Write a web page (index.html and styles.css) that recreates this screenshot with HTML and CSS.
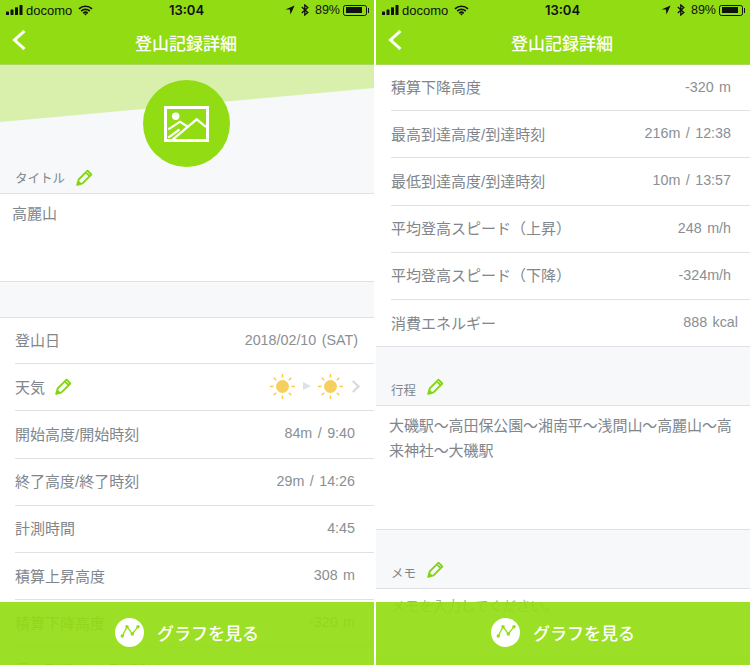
FILE: index.html
```html
<!DOCTYPE html>
<html lang="ja">
<head>
    <meta charset="UTF-8" />
    <meta name="viewport" content="width=device-width, initial-scale=1.0" />
    <title>登山記録詳細</title>
    <link rel="stylesheet" href="styles.css">
</head>
<body>
    <svg class="icon-defs" aria-hidden="true">
        <symbol id="i-signal" viewBox="0 0 17 10">
            <rect x="0" y="6.5" width="3" height="3.5" rx=".6" />
            <rect x="4.5" y="4.5" width="3" height="5.5" rx=".6" />
            <rect x="9" y="2.2" width="3" height="7.8" rx=".6" />
            <rect x="13.5" y="0" width="3" height="10" rx=".6" />
        </symbol>
        <symbol id="i-wifi" viewBox="0 0 15 11">
            <path d="M1 3.9a9.3 9.3 0 0 1 13 0M3.2 6.2a6.2 6.2 0 0 1 8.6 0M5.3 8.3a3.2 3.2 0 0 1 4.4 0" fill="none" stroke="#111" stroke-width="1.7" />
            <path d="M6.4 9.4l1.1-1 1.1 1-1.1 1.2z" />
        </symbol>
        <symbol id="i-arrow" viewBox="0 0 10 10">
            <path d="M9.6.4L.4 4.6h4.5l.6 5z" />
        </symbol>
        <symbol id="i-bt" viewBox="0 0 8 12">
            <path d="M.8 3l6 5.4L3.8 11V1l3 2.6-6 5.4" fill="none" stroke="#111" stroke-width="1.3" />
        </symbol>
        <symbol id="i-back" viewBox="0 0 14 20">
            <path d="M12.5 1l-10 9 10 9" fill="none" stroke="#fff" stroke-width="3" />
        </symbol>
        <symbol id="i-pencil" viewBox="0 0 17 17">
            <path d="M1.200 15.800l1.500-5.300 8.800-8.800 3.800 3.800-8.800 8.800zM9.800 3.400l3.800 3.800" fill="none" stroke="#84d414" stroke-width="1.800" stroke-linejoin="round" />
            <path d="M.6 16.400l1.500-5.400 3.900 3.900z" fill="#84d414" />
        </symbol>
        <symbol id="i-sun" viewBox="0 0 25 25">
            <circle cx="12.500" cy="12.500" r="6.500" fill="#f5cf62" />
            <path d="M12.500 0v3.500M12.500 21.500v3.500M0 12.500h3.500M21.500 12.500h3.500M3.700 3.700l2.500 2.500M18.800 18.800l2.500 2.500M3.700 21.300l2.500-2.500M18.800 6.200l2.500-2.500" stroke="#f7cb4d" stroke-width="1.500" />
        </symbol>
        <symbol id="i-graph" viewBox="0 0 29 29">
            <circle cx="14.500" cy="14.500" r="14.500" fill="#fff" />
            <path d="M7.300 18L12 8.700l5.300 7.300 5.700-7.300" fill="none" stroke="#92dc14" stroke-width="1.300" />
            <circle cx="7.300" cy="18" r="1.700" fill="#92dc14" />
            <circle cx="12" cy="8.700" r="1.700" fill="#92dc14" />
            <circle cx="17.300" cy="16" r="1.700" fill="#92dc14" />
            <circle cx="23" cy="8.700" r="1.700" fill="#92dc14" />
        </symbol>
    </svg>

    <div class="shots">
        <!-- left: top of the record -->
        <section class="phone">
            <header class="topbar">
                <div class="status">
                    <div class="status-left">
                        <svg class="ic-signal"><use href="#i-signal" /></svg>
                        <span>docomo</span>
                        <svg class="ic-wifi"><use href="#i-wifi" /></svg>
                    </div>
                    <div class="status-time">13:04</div>
                    <div class="status-right">
                        <svg class="ic-arrow"><use href="#i-arrow" /></svg>
                        <svg class="ic-bt"><use href="#i-bt" /></svg>
                        <span>89%</span>
                        <div class="battery"><div class="battery-fill"></div></div>
                    </div>
                </div>
                <div class="navbar">
                    <svg class="ic-back"><use href="#i-back" /></svg>
                    <h1>登山記録詳細</h1>
                </div>
            </header>

            <div class="hero">
                <div class="photo">
                    <svg class="ic-photo" viewBox="0 0 45 36">
                        <rect x="1.500" y="1.500" width="42" height="33" fill="none" stroke="#fff" stroke-width="3" />
                        <circle cx="11.700" cy="10.300" r="3.700" fill="#fff" />
                        <path d="M4.300 23.300L16 15.700l8.300 5.300M7.700 34.300l25-21L42 21M4.300 31.700L15.500 23.500" fill="none" stroke="#fff" stroke-width="2.200" />
                    </svg>
                </div>
                <div class="sec-label sec-label-hero">
                    <span>タイトル</span>
                    <svg class="ic-pencil"><use href="#i-pencil" /></svg>
                </div>
            </div>
            <div class="textbox textbox-title">高麗山</div>

            <div class="rows rows-first">
                <div class="row"><span>登山日</span><span class="val val-date">2018/02/10 (SAT)</span></div>
                <div class="row">
                    <span class="row-name">天気<svg class="ic-pencil"><use href="#i-pencil" /></svg></span>
                    <span class="weather">
                        <svg class="ic-sun"><use href="#i-sun" /></svg>
                        <span class="tri"></span>
                        <svg class="ic-sun"><use href="#i-sun" /></svg>
                        <span class="chev"></span>
                    </span>
                </div>
                <div class="row"><span>開始高度/開始時刻</span><span class="val">84m / 9:40</span></div>
                <div class="row"><span>終了高度/終了時刻</span><span class="val">29m / 14:26</span></div>
                <div class="row"><span>計測時間</span><span class="val">4:45</span></div>
                <div class="row"><span>積算上昇高度</span><span class="val">308 m</span></div>
                <div class="row"><span>積算下降高度</span><span class="val">-320 m</span></div>
                <div class="row"><span>最高到達高度/到達時刻</span><span class="val">216m / 12:38</span></div>
            </div>

            <a class="graph-btn">
                <svg class="ic-graph"><use href="#i-graph" /></svg>
                <span>グラフを見る</span>
            </a>
        </section>

        <!-- right: same screen scrolled down -->
        <section class="phone">
            <header class="topbar">
                <div class="status">
                    <div class="status-left">
                        <svg class="ic-signal"><use href="#i-signal" /></svg>
                        <span>docomo</span>
                        <svg class="ic-wifi"><use href="#i-wifi" /></svg>
                    </div>
                    <div class="status-time">13:04</div>
                    <div class="status-right">
                        <svg class="ic-arrow"><use href="#i-arrow" /></svg>
                        <svg class="ic-bt"><use href="#i-bt" /></svg>
                        <span>89%</span>
                        <div class="battery"><div class="battery-fill"></div></div>
                    </div>
                </div>
                <div class="navbar">
                    <svg class="ic-back"><use href="#i-back" /></svg>
                    <h1>登山記録詳細</h1>
                </div>
            </header>

            <div class="rows rows-scrolled">
                <div class="row"><span>積算下降高度</span><span class="val">-320 m</span></div>
                <div class="row"><span>最高到達高度/到達時刻</span><span class="val">216m / 12:38</span></div>
                <div class="row"><span>最低到達高度/到達時刻</span><span class="val">10m / 13:57</span></div>
                <div class="row"><span>平均登高スピード（上昇）</span><span class="val">248 m/h</span></div>
                <div class="row"><span>平均登高スピード（下降）</span><span class="val">-324m/h</span></div>
                <div class="row"><span>消費エネルギー</span><span class="val val-kcal">888 kcal</span></div>
            </div>

            <div class="sec-label">
                <span>行程</span>
                <svg class="ic-pencil"><use href="#i-pencil" /></svg>
            </div>
            <div class="textbox textbox-route">大磯駅〜高田保公園〜湘南平〜浅間山〜高麗山〜高来神社〜大磯駅</div>

            <div class="sec-label">
                <span>メモ</span>
                <svg class="ic-pencil"><use href="#i-pencil" /></svg>
            </div>
            <div class="textbox textbox-memo">メモを入力してください。</div>

            <a class="graph-btn">
                <svg class="ic-graph"><use href="#i-graph" /></svg>
                <span>グラフを見る</span>
            </a>
        </section>
    </div>
</body>
</html>
```

FILE: styles.css
```css
* {
    box-sizing: border-box;
}
body {
    margin: 0;
    background-color: #fff;
    color: #80868c;
    font-family: "Liberation Sans", "Noto Sans CJK JP", sans-serif;
    font-size: 14px;
}
.icon-defs {
    display: none;
}
.shots {
    display: flex;
    justify-content: space-between;
    width: 750px;
    height: 665px;
}
.phone {
    position: relative;
    width: 374px;
    height: 665px;
    overflow: hidden;
    background-color: #f7f8fa;
}

/* top bar */
.topbar {
    height: 65px;
    background-color: #92dc14;
    border-bottom: 1px solid #a8d860;
}
.status {
    display: grid;
    grid-template-columns: 1fr auto 1fr;
    align-items: center;
    height: 20px;
    padding: 0 7px 0 6px;
    color: #111;
    font-size: 13px;
}
.status svg {
    fill: #111;
}
.status-left, .status-right {
    display: flex;
    align-items: center;
}
.status-right {
    justify-content: flex-end;
    font-size: 12.500px;
}
.status-time {
    font-family: Inter, "Liberation Sans", sans-serif;
    font-size: 13px;
    font-weight: 600;
}
.ic-signal {
    width: 17px;
    height: 10px;
    margin-right: 3px;
}
.ic-wifi {
    width: 15px;
    height: 11px;
    margin-left: 6px;
}
.ic-arrow {
    width: 10px;
    height: 10px;
    margin-right: 6px;
}
.ic-bt {
    width: 8px;
    height: 12px;
    margin-right: 6px;
}
.battery {
    position: relative;
    width: 24px;
    height: 11px;
    margin-left: 3px;
    padding: 1.500px;
    border: 1px solid #111;
    border-radius: 2.500px;
}
.battery::after {
    content: "";
    position: absolute;
    top: 2px;
    right: -3px;
    width: 1.500px;
    height: 5px;
    background-color: #111;
}
.battery-fill {
    width: 89%;
    height: 100%;
    background-color: #111;
}
.navbar {
    position: relative;
    display: flex;
    align-items: center;
    justify-content: center;
    height: 44px;
}
.navbar h1 {
    margin: 0 2px 0 0;
    color: #fff;
    font-size: 17px;
    font-weight: 500;
}
.ic-back {
    position: absolute;
    top: 10px;
    left: 12px;
    width: 14px;
    height: 20px;
}

/* hero with the record photo */
.hero {
    position: relative;
    display: flex;
    flex-direction: column;
    align-items: center;
    height: 129px;
    padding-top: 15px;
}
.hero::before {
    content: "";
    position: absolute;
    top: 0;
    left: 0;
    width: 100%;
    height: 57px;
    background-color: #d9efac;
    clip-path: polygon(0 0, 100% 0, 100% 23px, 0 100%);
}
.photo {
    position: relative;
    display: flex;
    align-items: center;
    justify-content: center;
    width: 87px;
    height: 87px;
    margin-right: 1px;
    border-radius: 50%;
    background-color: #92dc14;
}
.ic-photo {
    width: 45px;
    height: 36px;
}

/* section labels */
.sec-label {
    display: flex;
    align-items: center;
    gap: 11px;
    width: 100%;
    height: 59px;
    padding: 33px 0 6px 15px;
    border-bottom: 1px solid #dfe1e4;
    font-size: 12.500px;
}
.sec-label .ic-pencil {
    margin-bottom: 6px;
}
.sec-label span {
    margin-bottom: 1px;
}
.sec-label-hero {
    position: relative;
    height: 27px;
    padding: 0 0 5px 15px;
}
.sec-label-hero .ic-pencil {
    margin-bottom: 0;
}
.ic-pencil {
    width: 17px;
    height: 17px;
}

/* free text boxes */
.textbox {
    background-color: #fff;
    font-size: 15px;
    border-bottom: 1px solid #dfe1e4;
}
.textbox-title {
    height: 88px;
    padding: 8px 12px;
}
.textbox-route {
    height: 124px;
    padding: 7px 6px 0 13px;
    letter-spacing: -.1px;
    line-height: 25px;
}
.textbox-memo {
    height: 70px;
    padding: 6px 15px;
    color: #a4a8ac;
    font-size: 14px;
}

/* data rows */
.rows {
    padding-left: 15px;
    background-color: #fff;
    font-size: 15px;
    border-bottom: 1px solid #dfe1e4;
}
.rows-first {
    margin-top: 35px;
    border-top: 1px solid #dfe1e4;
}
.row {
    display: flex;
    align-items: center;
    justify-content: space-between;
    height: 47.250px;
    padding: 0 19px 2px 0;
    border-bottom: 1px solid #dfe1e4;
}
.row:first-child {
    height: 46px;
}
.row:last-child {
    height: 46px;
    border-bottom: none;
}
.row-name {
    display: flex;
    align-items: center;
    gap: 10px;
}
.val {
    color: #8a8f94;
    font-size: 14.300px;
    word-spacing: 1.500px;
}
/* these two ran past the right edge of the column in the app */
.val-date {
    margin-right: -3px;
}
.val-kcal {
    margin-right: -7px;
}
.weather {
    display: flex;
    align-items: center;
    margin-right: -5px;
}
.ic-sun {
    width: 25px;
    height: 25px;
}
.tri {
    width: 0;
    height: 0;
    margin: 0 7px 0 8px;
    border-left: 8px solid #dfe1e3;
    border-top: 4.500px solid transparent;
    border-bottom: 4.500px solid transparent;
}
.chev {
    width: 9px;
    height: 9px;
    margin: 0 2px 0 6px;
    border-top: 2px solid #d3d8da;
    border-right: 2px solid #d3d8da;
    transform: rotate(45deg);
}

/* button floating over the scrolling page */
.graph-btn {
    position: absolute;
    left: 0;
    right: 0;
    bottom: 0;
    display: flex;
    align-items: center;
    justify-content: center;
    gap: 13px;
    height: 63px;
    padding-bottom: 2px;
    background-color: rgba(146, 220, 20, .92);
    color: #fff;
    font-size: 17px;
    font-weight: 500;
}
.ic-graph {
    width: 29px;
    height: 29px;
}
```
